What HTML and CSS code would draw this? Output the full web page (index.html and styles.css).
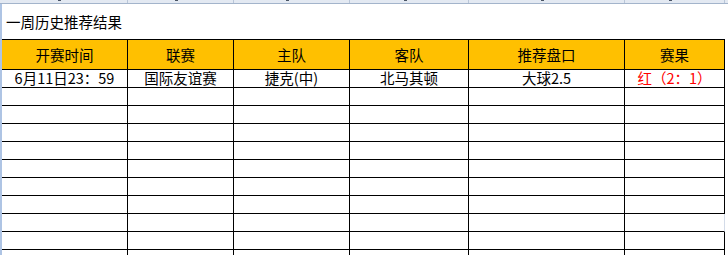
FILE: index.html
```html
<!DOCTYPE html>
<html lang="zh-CN">
<head>
    <meta charset="UTF-8">
    <meta name="viewport" content="width=device-width, initial-scale=1.0">
    <title>一周历史推荐结果</title>
    <link rel="stylesheet" href="styles.css">
</head>
<body>
    <!-- column header edge (A..F) -->
    <div class="colbar">
        <div class="colhead"><span class="mark"></span></div>
        <div class="colhead"><span class="mark"></span></div>
        <div class="colhead"><span class="mark"></span></div>
        <div class="colhead"><span class="mark"></span></div>
        <div class="colhead"><span class="mark"></span></div>
        <div class="colhead"><span class="mark"></span></div>
    </div>

    <div class="sheet">
        <div class="title">一周历史推荐结果</div>

        <div class="grid results">
            <div class="cell head">开赛时间</div>
            <div class="cell head">联赛</div>
            <div class="cell head">主队</div>
            <div class="cell head">客队</div>
            <div class="cell head">推荐盘口</div>
            <div class="cell head">赛果</div>

            <div class="cell">6月11日23：59</div>
            <div class="cell">国际友谊赛</div>
            <div class="cell">捷克(中)</div>
            <div class="cell">北马其顿</div>
            <div class="cell">大球2.5</div>
            <div class="cell red">红（2：1）</div>
        </div>
        <div class="grid" id="emptyRows"></div>
    </div>

    <script>
        // blank rows below the results
        const emptyRows = document.getElementById("emptyRows");
        for (let r = 0; r < 10; r++) {
            for (let c = 0; c < 6; c++) {
                const cell = document.createElement("div");
                cell.classList.add("cell");
                if (r === 7 && c === 5) cell.classList.add("open");
                emptyRows.appendChild(cell);
            }
        }
    </script>
</body>
</html>
```

FILE: styles.css
```css
body {
    margin: 0;
    padding: 0;
    background: white;
    color: black;
    font-family: "Noto Sans CJK SC", "Noto Sans", sans-serif;
    font-size: 14.5px;
    overflow: hidden;
}

.colbar {
    display: grid;
    grid-template-columns: 128px 106px 116px 119px 156px 100px;
    height: 3px;
    background: #e3e9f2;
    border-bottom: 1px solid #a3b4cb;
    overflow: hidden;
}

.colhead {
    border-right: 1px solid #b9c6d8;
    display: flex;
    justify-content: center;
}

.mark {
    width: 3px;
    height: 1px;
    background: #4a5566;
    margin-left: -8px;
}

.sheet {
    border-left: 2px solid #aec4e4;
    height: 251px;
    overflow: hidden;
}

.title {
    height: 35px;
    display: flex;
    align-items: center;
    padding-left: 4px;
    padding-bottom: 1px;
    box-sizing: border-box;
}

.grid {
    display: grid;
    grid-template-columns: 126px 106px 116px 119px 156px 100px;
    grid-auto-rows: 18px;
    width: 723px;
}

.results {
    grid-template-rows: 30px 18px;
    border-top: 1px solid black;
}

.cell {
    box-sizing: border-box;
    border-right: 1px solid black;
    border-bottom: 1px solid black;
    display: flex;
    align-items: center;
    justify-content: center;
    line-height: 1;
    white-space: nowrap;
}

.cell.head {
    background: #ffc000;
    padding-top: 2px;
}

.cell.red {
    color: #ff0000;
}

.cell.open {
    border-right-color: #d3dbe8;
}
```
